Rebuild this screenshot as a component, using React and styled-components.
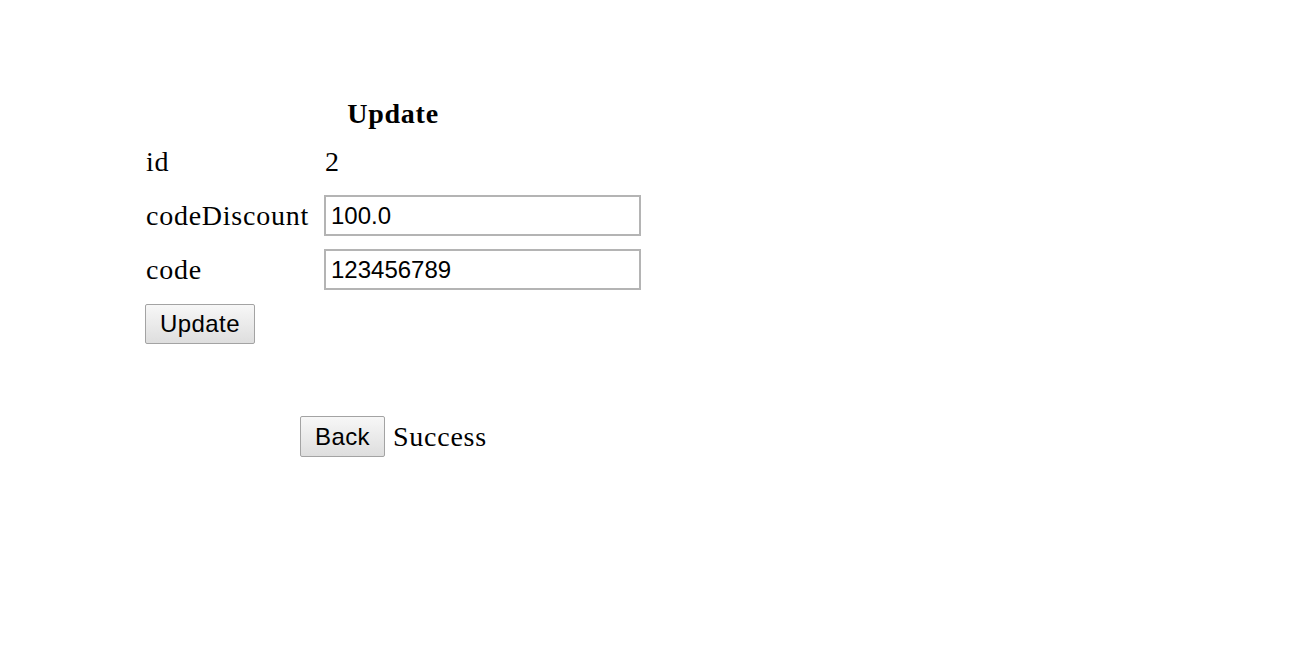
import React from 'react';
import styled, { createGlobalStyle } from 'styled-components';

const GlobalStyle = createGlobalStyle`
  body {
    margin: 0;
    background: #ffffff;
    font-family: "Liberation Serif", "Times New Roman", serif;
    font-size: 28px;
    letter-spacing: 0.75px;
    color: #000;
  }
`

const Page = styled.div`
  padding: 100px 0 0 145px;
`

const Form = styled.form`
  display: grid;
  grid-template-columns: 179px 317px;
  grid-template-rows: 28px;
  grid-auto-rows: 41px;
  row-gap: 13px;
  align-items: center;
  width: 496px;
`

const Caption = styled.div`
  grid-column: 1 / -1;
  text-align: center;
  font-weight: bold;
  line-height: 28px;
`

const Label = styled.span`
  padding-left: 1px;
  line-height: 32px;
`

const Value = styled.span`
  padding-left: 1px;
  line-height: 32px;
`

const Field = styled.input`
  box-sizing: border-box;
  width: 317px;
  height: 41px;
  margin: 0;
  padding: 0 5px;
  border: 2px solid #b4b4b4;
  border-radius: 0;
  font-family: "Liberation Sans", Arial, sans-serif;
  font-size: 24px;
  letter-spacing: 0;
  color: #000;
  outline: none;
`

const Button = styled.button`
  box-sizing: border-box;
  width: ${p => p.$w}px;
  height: ${p => p.$h}px;
  margin: 0;
  padding: 0;
  border: 1px solid #a3a3a3;
  border-radius: 2px;
  background: linear-gradient(to bottom, #f7f7f7, #dedede);
  font-family: "Liberation Sans", Arial, sans-serif;
  font-size: 24px;
  letter-spacing: 0.4px;
  color: #000;
`

const Footer = styled.div`
  display: flex;
  align-items: center;
  gap: 8px;
  margin: 72px 0 0 155px;
`

export default function App() {
  return (
    <Page>
      <GlobalStyle />
      <Form onSubmit={e => e.preventDefault()}>
        <Caption>Update</Caption>
        <Label>id</Label>
        <Value>2</Value>
        <Label>codeDiscount</Label>
        <Field defaultValue="100.0" />
        <Label>code</Label>
        <Field defaultValue="123456789" />
        <div>
          <Button type="submit" $w={110} $h={40}>Update</Button>
        </div>
      </Form>
      <Footer>
        <Button type="button" $w={85} $h={41}>Back</Button>
        <span>Success</span>
      </Footer>
    </Page>
  );
}
